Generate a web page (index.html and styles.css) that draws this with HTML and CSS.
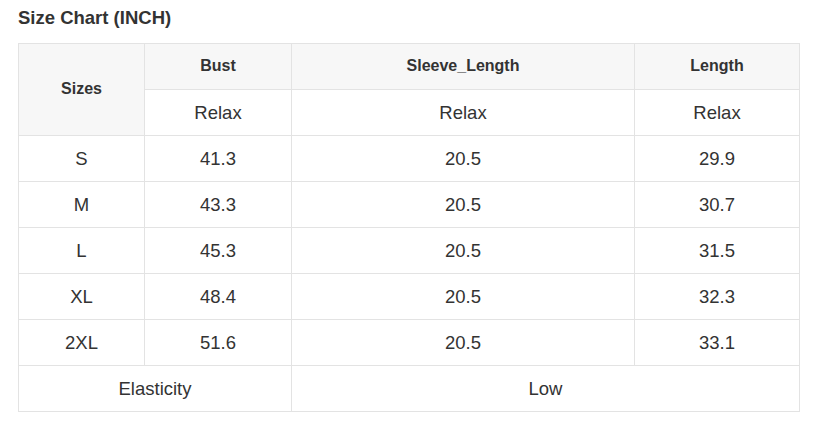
FILE: index.html
```html
<!DOCTYPE html>
<html>
<head>
<meta charset="utf-8">
<link rel="stylesheet" href="styles.css">
</head>
<body>
<div class="wrap">
  <h2 class="title">Size Chart (INCH)</h2>
  <table class="chart">
    <colgroup>
      <col class="c1"><col class="c2"><col class="c3"><col class="c4">
    </colgroup>
    <tr class="head">
      <th rowspan="2" class="sizes">Sizes</th>
      <th>Bust</th>
      <th>Sleeve_Length</th>
      <th>Length</th>
    </tr>
    <tr>
      <td>Relax</td><td>Relax</td><td>Relax</td>
    </tr>
    <tr><td>S</td><td>41.3</td><td>20.5</td><td>29.9</td></tr>
    <tr><td>M</td><td>43.3</td><td>20.5</td><td>30.7</td></tr>
    <tr><td>L</td><td>45.3</td><td>20.5</td><td>31.5</td></tr>
    <tr><td>XL</td><td>48.4</td><td>20.5</td><td>32.3</td></tr>
    <tr><td>2XL</td><td>51.6</td><td>20.5</td><td>33.1</td></tr>
    <tr><td colspan="2">Elasticity</td><td colspan="2">Low</td></tr>
  </table>
</div>
</body>
</html>
```
FILE: styles.css
```css
html, body {
  margin: 0;
  padding: 0;
  background: #fff;
}
body {
  font-family: "Liberation Sans", Arial, sans-serif;
  color: #333;
}
.wrap {
  padding: 7px 0 0 18px;
}
.title {
  margin: 0;
  font-size: 18.5px;
  font-weight: bold;
  line-height: 22px;
  color: #333;
}
.chart {
  margin-top: 14px;
  border-collapse: collapse;
  width: 781px;
  table-layout: fixed;
}
.c1 { width: 126px; }
.c2 { width: 147px; }
.c3 { width: 343px; }
.c4 { width: 165px; }
.chart th, .chart td {
  border: 1px solid #e3e3e3;
  padding: 0;
  text-align: center;
  vertical-align: middle;
  box-sizing: border-box;
}
.chart td {
  height: 46px;
  font-size: 18.5px;
  color: #333;
}
.chart th {
  height: 46px;
  background: #f7f7f7;
  font-size: 16px;
  font-weight: bold;
  color: #333;
  padding-bottom: 1px;
}
.chart th.sizes {
  height: 92px;
  padding-bottom: 2px;
}
```
